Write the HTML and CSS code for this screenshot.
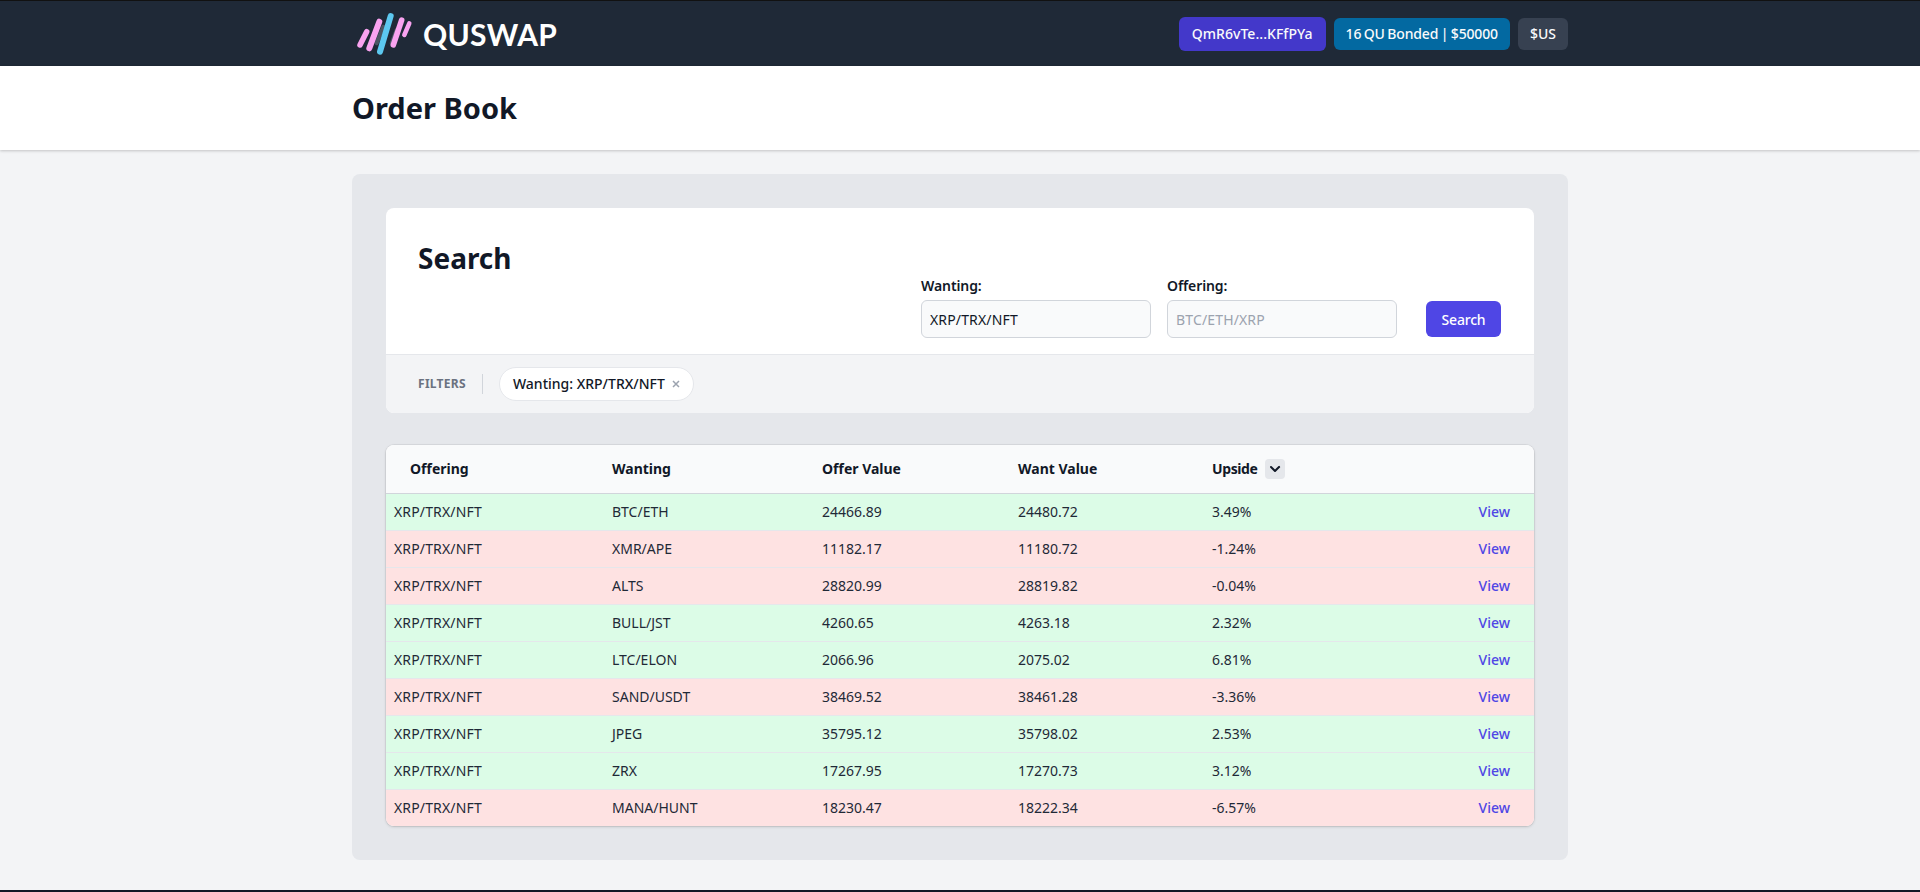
FILE: index.html
```html
<!DOCTYPE html>
<html lang="en">
<head>
<meta charset="utf-8">
<title>Order Book</title>
<link rel="stylesheet" href="styles.css">
</head>
<body>
<nav class="nav">
  <div class="wrap nav-inner">
    <a class="brand" href="#">
      <svg class="logo" viewBox="0 0 58 44" width="58" height="44" aria-hidden="true">
        <g fill="none" stroke-linecap="round">
          <path d="M20.7 31.3 L27.3 14.7" stroke="#4b5563" stroke-width="4"/>
          <path d="M35.7 31.3 L40.7 18" stroke="#4b5563" stroke-width="4"/>
          <path d="M4 33 L10.7 19.7" stroke="#f9a3f0" stroke-width="5.5"/>
          <path d="M13.3 36.3 L23.3 9.7" stroke="#f9a3f0" stroke-width="6"/>
          <path d="M24 39.7 L34.7 4" stroke="#5cc8f0" stroke-width="6"/>
          <path d="M37.3 33 L45.7 8" stroke="#f9a3f0" stroke-width="5.5"/>
          <path d="M48.3 23 L53.3 11.3" stroke="#f9a3f0" stroke-width="4.5"/>
        </g>
      </svg>
      <span class="brand-name">QUSWAP</span>
    </a>
    <div class="nav-actions">
      <button class="pill pill-indigo">QmR6vTe...KFfPYa</button>
      <button class="pill pill-blue">16 QU Bonded | $50000</button>
      <button class="pill pill-gray">$US</button>
    </div>
  </div>
</nav>
<header class="page-head">
  <div class="wrap"><h1>Order Book</h1></div>
</header>
<main class="wrap">
  <div class="panel">
    <section class="search-card">
      <div class="search-top">
        <h2>Search</h2>
        <form class="search-form">
          <label class="field"><span>Wanting:</span><input type="text" value="XRP/TRX/NFT"></label>
          <label class="field"><span>Offering:</span><input type="text" placeholder="BTC/ETH/XRP"></label>
          <button type="button" class="search-btn">Search</button>
        </form>
      </div>
      <div class="filters">
        <span class="filters-label">FILTERS</span>
        <span class="filters-sep"></span>
        <span class="chip">Wanting: XRP/TRX/NFT
          <svg class="chip-x" viewBox="0 0 8 8" width="8" height="8" aria-hidden="true"><path d="M1 1l6 6M7 1l-6 6" stroke="#9ca3af" stroke-width="1.5" fill="none"/></svg>
        </span>
      </div>
    </section>
    <section class="table-card">
      <table>
        <colgroup>
          <col class="c1"><col class="c2"><col class="c3"><col class="c4"><col class="c5"><col>
        </colgroup>
        <thead>
          <tr>
            <th class="first">Offering</th>
            <th>Wanting</th>
            <th>Offer Value</th>
            <th>Want Value</th>
            <th><span class="upside">Upside
              <span class="sort"><svg viewBox="0 0 20 20" width="20" height="20" aria-hidden="true"><path d="M5.3 7.3a1 1 0 011.4 0L10 10.6l3.3-3.3a1 1 0 111.4 1.4l-4 4a1 1 0 01-1.4 0l-4-4a1 1 0 010-1.4z" fill="#111827"/></svg></span>
            </span></th>
            <th></th>
          </tr>
        </thead>
        <tbody>
          <tr class="up"><td class="first">XRP/TRX/NFT</td><td>BTC/ETH</td><td>24466.89</td><td>24480.72</td><td>3.49%</td><td class="act"><a href="#">View</a></td></tr>
          <tr class="down"><td class="first">XRP/TRX/NFT</td><td>XMR/APE</td><td>11182.17</td><td>11180.72</td><td>-1.24%</td><td class="act"><a href="#">View</a></td></tr>
          <tr class="down"><td class="first">XRP/TRX/NFT</td><td>ALTS</td><td>28820.99</td><td>28819.82</td><td>-0.04%</td><td class="act"><a href="#">View</a></td></tr>
          <tr class="up"><td class="first">XRP/TRX/NFT</td><td>BULL/JST</td><td>4260.65</td><td>4263.18</td><td>2.32%</td><td class="act"><a href="#">View</a></td></tr>
          <tr class="up"><td class="first">XRP/TRX/NFT</td><td>LTC/ELON</td><td>2066.96</td><td>2075.02</td><td>6.81%</td><td class="act"><a href="#">View</a></td></tr>
          <tr class="down"><td class="first">XRP/TRX/NFT</td><td>SAND/USDT</td><td>38469.52</td><td>38461.28</td><td>-3.36%</td><td class="act"><a href="#">View</a></td></tr>
          <tr class="up"><td class="first">XRP/TRX/NFT</td><td>JPEG</td><td>35795.12</td><td>35798.02</td><td>2.53%</td><td class="act"><a href="#">View</a></td></tr>
          <tr class="up"><td class="first">XRP/TRX/NFT</td><td>ZRX</td><td>17267.95</td><td>17270.73</td><td>3.12%</td><td class="act"><a href="#">View</a></td></tr>
          <tr class="down"><td class="first">XRP/TRX/NFT</td><td>MANA/HUNT</td><td>18230.47</td><td>18222.34</td><td>-6.57%</td><td class="act"><a href="#">View</a></td></tr>
        </tbody>
      </table>
    </section>
  </div>
</main>
<div class="foot"></div>
</body>
</html>
```
FILE: styles.css
```css
* { box-sizing: border-box; }
html, body { margin: 0; height: 100%; }
body {
  background: #f3f4f6;
  color: #111827;
  font-family: "Noto Sans", "Open Sans", sans-serif;
  font-size: 14px;
  line-height: 20px;
  min-height: 892px;
  overflow: hidden;
  display: flex;
  flex-direction: column;
}
.wrap { width: 1216px; margin: 0 auto; }
.nav { background: #1f2937; height: 66px; border-top: 1px solid #111; flex: none; }
.nav-inner { height: 65px; display: flex; align-items: center; justify-content: space-between; }
.brand { display: flex; align-items: center; gap: 9px; color: #fff; text-decoration: none; margin-left: 4px; }
.logo { display: block; }
.brand-name { font-family: Lato, "Noto Sans", sans-serif; font-size: 30px; font-weight: 700; line-height: 40px; letter-spacing: 0.3px; }
.nav-actions { display: flex; align-items: center; gap: 8px; }
.pill { border: 0; border-radius: 6px; color: #f9fafb; font: 500 14px/20px "Noto Sans", sans-serif; padding: 6px 12px; height: 32px; }
.pill-indigo { background: #4338ca; height: 34px; padding: 7px 13px; letter-spacing: .05px; }
.pill-blue { background: #0369a1; letter-spacing: -.15px; word-spacing: -1px; }
.pill-gray { background: #374151; }
.page-head { background: #fff; height: 84px; display: flex; align-items: center; box-shadow: 0 1px 3px rgba(0,0,0,.15), 0 1px 2px rgba(0,0,0,.06); position: relative; flex: none; }
h1 { margin: 0; font-size: 29px; line-height: 36px; font-weight: 700; color: #111827; }
main { padding-top: 24px; flex: 1; }
.panel { background: #e5e7eb; border-radius: 8px; padding: 34px; height: 686px; }
.search-card { background: #fff; border-radius: 8px; overflow: hidden; }
.search-top { display: flex; justify-content: space-between; height: 146px; padding: 32px 33px 0 32px; }
h2 { margin: 0; font-size: 28px; line-height: 36px; font-weight: 700; }
.search-form { display: flex; align-items: flex-end; height: 98px; gap: 16px; align-self: flex-start; }
.field { display: flex; flex-direction: column; width: 230px; }
.field span { font-weight: 600; line-height: 20px; margin-bottom: 4px; color: #111827; letter-spacing: -.1px; }
.field input { height: 38px; border: 1px solid #d1d5db; border-radius: 6px; background: #f9fafb; padding: 0 8px; font: 14px "Noto Sans", sans-serif; letter-spacing: .15px; color: #111827; outline: 0; }
.field input::placeholder { color: #9ca3af; }
.search-btn { width: 75px; height: 36px; margin: 0 0 1px 13px; padding: 0; border: 0; border-radius: 6px; background: #4f46e5; color: #fff; font: 500 14px "Noto Sans", sans-serif; letter-spacing: -.2px; }
.filters { background: #f3f4f6; border-top: 1px solid #e5e7eb; height: 59px; display: flex; align-items: center; padding-left: 32px; }
.filters-label { color: #6b7280; font-size: 12px; font-weight: 700; letter-spacing: .3px; }
.filters-sep { width: 1px; height: 20px; background: #d1d5db; margin: 0 16px; }
.chip { display: inline-flex; align-items: center; gap: 7px; height: 34px; padding: 0 13px; background: #fff; border: 1px solid #e5e7eb; border-radius: 999px; font-weight: 500; color: #111827; }
.chip-x { display: block; }
.table-card { margin-top: 32px; background: #fff; border-radius: 8px; overflow: hidden; box-shadow: 0 0 0 1px rgba(0,0,0,.05), 0 1px 3px rgba(0,0,0,.15); }
table { width: 100%; border-collapse: collapse; table-layout: fixed; }
.c1 { width: 226px; } .c2 { width: 210px; } .c3 { width: 196px; } .c4 { width: 194px; } .c5 { width: 200px; }
thead tr { background: #f9fafb; height: 48px; border-bottom: 1px solid #d1d5db; }
th { text-align: left; font-weight: 700; padding: 0; color: #111827; }
th.first { padding-left: 24px; }
td { padding: 0; height: 37px; color: #1f2937; }
td.first { padding-left: 8px; letter-spacing: .15px; }
tbody tr { border-bottom: 1px solid #e5e7eb; }
tbody tr:last-child { border-bottom: 0; }
tr.up { background: #dcfce7; }
tr.down { background: #fee2e2; }
.act { text-align: right; padding-right: 24px; }
.act a { color: #4f46e5; font-weight: 500; text-decoration: none; }
.upside { display: inline-flex; align-items: center; gap: 8px; letter-spacing: -.4px; }
.sort { width: 20px; height: 20px; border-radius: 4px; background: #e5e7eb; display: block; }
.sort svg { display: block; }
.foot { background: #111827; height: 2px; flex: none; }
```
